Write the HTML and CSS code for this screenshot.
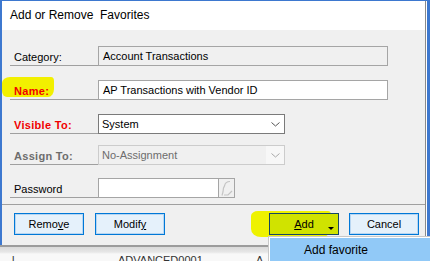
FILE: index.html
```html
<!DOCTYPE html>
<html>
<head>
    <title>Add or Remove Favorites</title>
    <link rel="stylesheet" href="styles.css">
</head>
<body>
    <div class="screen">
        <div class="dialog">
            <div class="inner">
                <div class="titlebar">Add or Remove&nbsp; Favorites</div>
                <div class="content">
                    <div class="row r-category">
                        <label class="label">Category:</label>
                        <div class="field readonly wide">Account Transactions</div>
                    </div>
                    <div class="row r-name">
                        <label class="label required"><span class="marker"></span><span class="txt">Name:</span></label>
                        <div class="field wide">AP Transactions with Vendor ID</div>
                    </div>
                    <div class="row r-visible">
                        <label class="label required">Visible To:</label>
                        <div class="field combo">
                            <span class="val">System</span>
                            <span class="arrow"><svg width="9" height="5" viewBox="0 0 9 5"><path d="M0.5 0.5 L4.5 4 L8.5 0.5" fill="none" stroke="#555" stroke-width="1"/></svg></span>
                        </div>
                    </div>
                    <div class="row r-assign">
                        <label class="label disabled">Assign To:</label>
                        <div class="field combo off">
                            <span class="val">No-Assignment</span>
                            <span class="arrow"><svg width="9" height="5" viewBox="0 0 9 5"><path d="M0.5 0.5 L4.5 4 L8.5 0.5" fill="none" stroke="#a8a8a8" stroke-width="1"/></svg></span>
                        </div>
                    </div>
                    <div class="row r-password">
                        <label class="label">Password</label>
                        <div class="pwd">
                            <div class="field short"></div>
                            <div class="pick"><svg width="14" height="17" viewBox="0 0 14 17"><path d="M10 1.5 C7 1.5 5 3 4.5 6 L3.5 8 L3 12 L2 15.5 M4 15 L8 15 L12 11" fill="none" stroke="#c4c4c4" stroke-width="1.2"/></svg></div>
                        </div>
                    </div>
                    <div class="sep"></div>
                    <div class="buttons">
                        <div class="group">
                            <button class="btn">Remo<u>v</u>e</button>
                            <button class="btn">Modif<u>y</u></button>
                        </div>
                        <div class="group">
                            <div class="add-wrap">
                                <span class="marker big"></span>
                                <button class="btn add"><u>A</u>dd<span class="caret"></span></button>
                            </div>
                            <button class="btn">Cancel</button>
                        </div>
                    </div>
                </div>
            </div>
        </div>
        <div class="behind">
            <span class="tick">l</span>
            <span class="code">ADVANCED0001</span>
            <span class="code2">A</span>
        </div>
        <div class="menu">
            <div class="item">Add favorite</div>
        </div>
    </div>
</body>
</html>
```

FILE: styles.css
```css
body {
    margin: 0;
    font-family: "Liberation Sans", Arial, sans-serif;
    font-size: 11px;
    color: #000;
    background-color: #f5f5f5;
}

.screen {
    position: relative;
    width: 430px;
    height: 261px;
    overflow: hidden;
}

.dialog {
    height: 245px;
    box-sizing: border-box;
    border-top: 1px solid #3d78cf;
    border-left: 2px solid #3d78cf;
    border-right: 3px solid #3d78cf;
    padding-right: 1px;
    background-color: #fff;
}

.inner {
    height: 100%;
    border-right: 1px solid #8a8a8a;
    display: flex;
    flex-direction: column;
}

.titlebar {
    height: 29px;
    box-sizing: border-box;
    padding: 7px 0 0 8px;
    font-size: 12px;
    line-height: 14px;
    background-color: #fff;
}

.content {
    flex: 1;
    background-color: #f0f0f0;
    padding: 16px 0 0 8px;
}

.row {
    display: flex;
    height: 20px;
}

.r-name, .r-visible { margin-top: 14px; }
.r-assign { margin-top: 11px; }
.r-password { margin-top: 13px; }

.label {
    position: relative;
    width: 88px;
    height: 20px;
    box-sizing: border-box;
    border-bottom: 1px solid #a0a0a0;
    padding: 0 0 1px 4px;
    display: flex;
    align-items: flex-end;
    line-height: 13px;
}

.label.required {
    color: #f00000;
    font-weight: bold;
    letter-spacing: 0.3px;
}

.label.disabled {
    color: #6d6d6d;
    font-weight: bold;
    letter-spacing: 0.3px;
}

.label .txt {
    position: relative;
}

.marker {
    position: absolute;
    left: -8px;
    top: -3px;
    width: 52px;
    height: 20px;
    background-color: #f2f000;
    border-radius: 8px 3px 6px 5px / 6px 4px 8px 6px;
}

.field {
    height: 20px;
    box-sizing: border-box;
    border: 1px solid #a5a5a5;
    background-color: #fff;
    padding-left: 4px;
    display: flex;
    align-items: center;
    line-height: 13px;
}

.field.wide { width: 290px; }
.field.readonly { background-color: #f0f0f0; }

.field.combo {
    width: 187px;
    padding-left: 3px;
    border-color: #7a7a7a;
    position: relative;
}

.combo .val { flex: 1; }

.combo .arrow {
    width: 18px;
    height: 18px;
    display: flex;
    align-items: center;
    justify-content: center;
    padding-top: 1px;
    box-sizing: border-box;
}

.field.combo.off {
    border-color: #cccccc;
    background-color: #f0f0f0;
    color: #6d6d6d;
}

.combo.off .arrow {
    background-color: #f7f7f7;
}

.pwd {
    display: flex;
}

.field.short { width: 121px; }

.pick {
    width: 16px;
    height: 20px;
    box-sizing: border-box;
    border: 1px solid #a5a5a5;
    border-left: none;
    background-color: #f0f0f0;
    display: flex;
    align-items: center;
    justify-content: center;
}

.sep {
    height: 1px;
    margin: 6px 0 0 -8px;
    background-color: #a0a0a0;
}

.buttons {
    display: flex;
    justify-content: space-between;
    margin: 8px 6px 0 4px;
}

.group {
    display: flex;
    gap: 10px;
}

.group:first-child { gap: 11px; }

.btn {
    width: 70px;
    height: 22px;
    padding: 0;
    font-family: "Liberation Sans", Arial, sans-serif;
    font-size: 11px;
    color: #000;
    background-color: #e5f1fb;
    border: 1px solid #0078d7;
    box-shadow: inset 0 0 0 1px #b7d6f2;
}

.btn u {
    text-decoration: underline;
}

.add-wrap {
    position: relative;
    width: 70px;
    height: 22px;
}

.marker.big {
    left: -18px;
    top: -2px;
    width: 80px;
    height: 26px;
    background-color: #eef200;
    border-radius: 7px 3px 8px 10px / 5px 4px 9px 8px;
}

.btn.add {
    position: relative;
    background-color: #d0e300;
    border-color: #164763;
    box-shadow: none;
}

.caret {
    position: absolute;
    right: 4px;
    bottom: 4px;
    width: 0;
    height: 0;
    border-left: 3px solid transparent;
    border-right: 3px solid transparent;
    border-top: 3px solid #000;
}

.behind {
    position: relative;
    height: 16px;
    border-top: 2px solid #9c9c9c;
    background: linear-gradient(#dadada 0, #e6e6e6 5px, #f8f8f8 7px);
    font-size: 11px;
    line-height: 13px;
    color: #333;
}

.behind span {
    position: absolute;
    top: 7px;
}

.behind .tick { left: 12px; }
.behind .code { left: 118px; }
.behind .code2 { left: 256px; }

.menu {
    position: absolute;
    left: 268px;
    top: 236px;
    width: 162px;
    height: 25px;
    box-sizing: border-box;
    border: 1px solid #c8c8c8;
    border-right: none;
    border-bottom: none;
    padding: 1px 0 0 1px;
    background-color: #fff;
}

.item {
    height: 100%;
    background-color: #91c9f7;
    padding-left: 34px;
    font-size: 12px;
    line-height: 18px;
    padding-top: 3px;
    box-sizing: border-box;
}
```
